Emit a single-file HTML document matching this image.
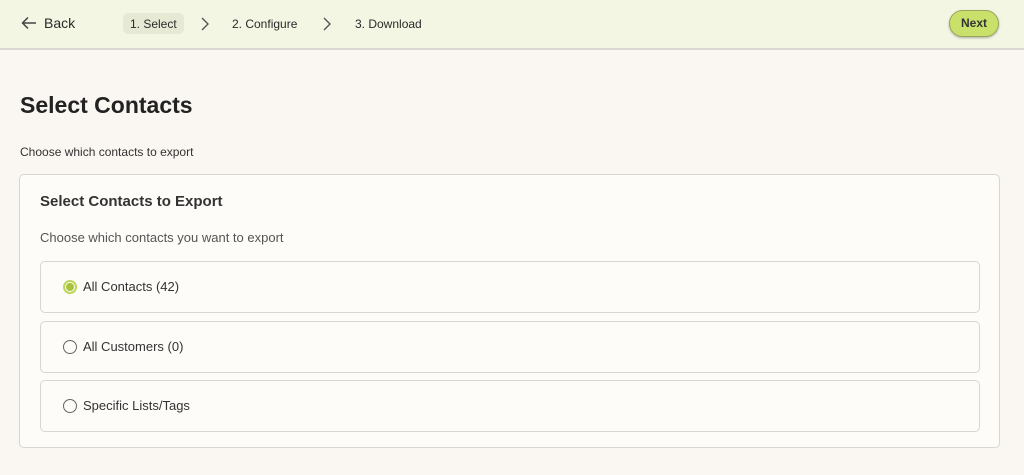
<!DOCTYPE html>
<html><head><meta charset="utf-8"><style>
*{box-sizing:border-box;margin:0;padding:0}
body{width:1024px;height:475px;overflow:hidden;background:#faf6f1;font-family:"Liberation Sans",sans-serif;color:#2a2a2a;position:relative}
.top{position:absolute;left:0;top:0;width:1024px;height:50px;background:#f3f6e3;border-bottom:2px solid #d9d9d2}
.t{position:absolute;font-size:12px;color:#2a2a2a}
.sel{position:absolute;left:123px;top:13px;width:61px;height:21px;background:#e6ead4;border-radius:5px}
.next{position:absolute;left:949px;top:10px;width:50px;height:27px;background:#c9e06a;border:1px solid #9aa85a;border-radius:14px;box-shadow:0 1px 2px rgba(0,0,0,.3);font-weight:bold;font-size:12px;text-align:center;line-height:25px;color:#333}
h1{position:absolute;left:20px;top:92px;font-size:23px;font-weight:bold;color:#222}
.sub{position:absolute;left:20px;top:145px;font-size:12px;color:#333}
.card{position:absolute;left:19px;top:174px;width:981px;height:274px;background:#fdfcf9;border:1px solid #d6d6d2;border-radius:5px}
.opt{position:absolute;left:40px;width:940px;height:52px;border:1px solid #d6d6d2;border-radius:5px;background:#fdfcf9}
.opt span{position:absolute;left:42px;top:17px;font-size:13px;color:#333}
.r{position:absolute;left:22px;top:18px;width:14px;height:14px;border:1.5px solid #666;border-radius:50%}
.r.on{border:2px solid #bcd65a}
.r.on:after{content:"";position:absolute;left:1px;top:1px;width:8px;height:8px;border-radius:50%;background:#a8c23f}
</style></head><body>
<div class="top">
<svg style="position:absolute;left:21px;top:16px" width="16" height="14" viewBox="0 0 16 14"><path d="M15 7H2M7 1.5 1.5 7 7 12.5" fill="none" stroke="#444" stroke-width="1.5"/></svg>
<div class="t" style="left:44px;top:15px;font-size:14px">Back</div>
<div class="sel"></div>
<div class="t" style="left:130px;top:17px">1. Select</div>
<svg style="position:absolute;left:200px;top:16px" width="10" height="16" viewBox="0 0 10 16"><path d="M2 2l6 6-6 6" fill="none" stroke="#555" stroke-width="1.4"/></svg>
<div class="t" style="left:232px;top:17px">2. Configure</div>
<svg style="position:absolute;left:322px;top:16px" width="10" height="16" viewBox="0 0 10 16"><path d="M2 2l6 6-6 6" fill="none" stroke="#555" stroke-width="1.4"/></svg>
<div class="t" style="left:355px;top:17px">3. Download</div>
<div class="next">Next</div>
</div>
<h1>Select Contacts</h1>
<div class="sub">Choose which contacts to export</div>
<div class="card">
<div style="position:absolute;left:20px;top:18px;font-size:15px;font-weight:bold;color:#333">Select Contacts to Export</div>
<div style="position:absolute;left:20px;top:55px;font-size:13px;color:#555">Choose which contacts you want to export</div>
</div>
<div class="opt" style="top:261px"><div class="r on"></div><span>All Contacts (42)</span></div>
<div class="opt" style="top:321px"><div class="r"></div><span>All Customers (0)</span></div>
<div class="opt" style="top:380px"><div class="r"></div><span>Specific Lists/Tags</span></div>
</body></html>
